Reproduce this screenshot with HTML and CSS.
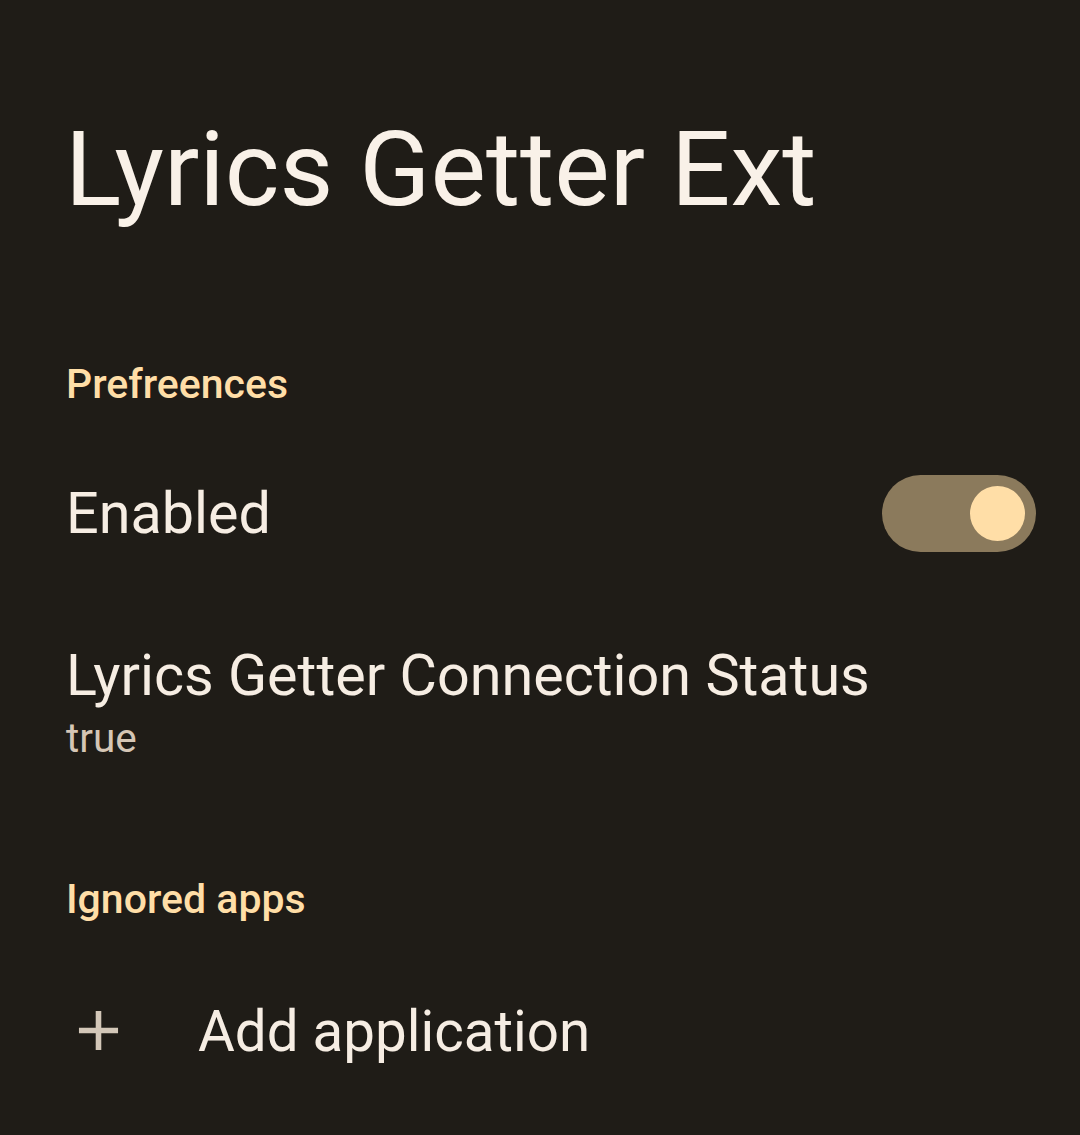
FILE: index.html
```html
<!DOCTYPE html>
<html lang="en">
<head>
<meta charset="utf-8">
<title>Lyrics Getter Ext</title>
<link rel="stylesheet" href="styles.css">
</head>
<body>
<main class="page">
  <h1 class="title">Lyrics Getter Ext</h1>

  <h2 class="section section-first">Prefreences</h2>

  <div class="row row-switch">
    <span class="item-title">Enabled</span>
    <span class="switch" role="switch" aria-checked="true"><span class="thumb"></span></span>
  </div>

  <div class="item">
    <div class="item-title">Lyrics Getter Connection Status</div>
    <div class="item-sub">true</div>
  </div>

  <h2 class="section section-second">Ignored apps</h2>

  <div class="row row-add">
    <svg class="add-icon" viewBox="0 0 24 24" aria-hidden="true"><path d="M19 13h-6v6h-2v-6H5v-2h6V5h2v6h6v2z"/></svg>
    <span class="item-title add-text">Add application</span>
  </div>
</main>
</body>
</html>
```
FILE: styles.css
```css
html, body {
  margin: 0;
  padding: 0;
  background: #1f1c17;
}
body {
  font-family: Roboto, "Noto Sans", sans-serif;
  color: #f6ede3;
}
.page {
  width: 1080px;
  height: 1135px;
  box-sizing: border-box;
  padding: 110px 44px 0 66px;
  overflow: hidden;
}
.title {
  margin: 0 0 0 -1px;
  font-size: 104.5px;
  line-height: 120px;
  font-weight: 400;
  color: #f9f1e8;
}
.section {
  margin: 0;
  font-size: 41px;
  line-height: 48px;
  font-weight: 500;
  color: #ffdea7;
}
.section-first {
  margin-top: 130px;
}
.section-second {
  margin-top: 113px;
}
.row {
  display: flex;
  align-items: center;
}
.row-switch {
  justify-content: space-between;
  height: 153px;
  margin-top: 29px;
}
.item-title {
  font-size: 57.5px;
  line-height: 66px;
  font-weight: 400;
  color: #f6ede3;
}
.switch {
  width: 154px;
  height: 77px;
  border-radius: 39px;
  background: #8b7a5c;
  display: flex;
  align-items: center;
  justify-content: flex-end;
  padding-right: 11px;
  box-sizing: border-box;
}
.thumb {
  width: 55px;
  height: 55px;
  border-radius: 50%;
  background: #ffdea7;
}
.item {
  margin-top: 53px;
}
.item-sub {
  margin-top: 5px;
  font-size: 40.5px;
  line-height: 48px;
  color: #d5c6b5;
}
.row-add {
  margin-top: 72px;
  margin-left: -1px;
  gap: 66px;
}
.add-icon {
  width: 67px;
  height: 67px;
  fill: #d3c7b8;
  flex: none;
}
.add-text {
  padding-top: 4px;
  font-size: 56.5px;
}
```
